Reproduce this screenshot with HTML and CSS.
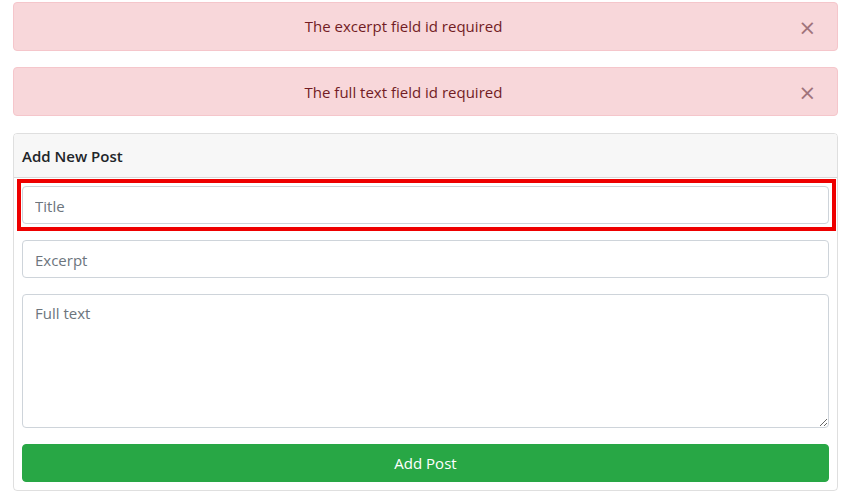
FILE: index.html
```html
<!DOCTYPE html>
<html>
<head>
<meta charset="utf-8">
<link rel="stylesheet" href="styles.css">
</head>
<body>
<div class="page">
  <div class="alert">
    <span class="alert-text">The excerpt field id required</span>
    <span class="close">&times;</span>
  </div>
  <div class="alert">
    <span class="alert-text">The full text field id required</span>
    <span class="close">&times;</span>
  </div>
  <div class="card">
    <div class="card-header">Add New Post</div>
    <div class="card-body">
      <div class="group highlighted">
        <input class="field" type="text" placeholder="Title">
        <div class="mark"></div>
      </div>
      <div class="group">
        <input class="field" type="text" placeholder="Excerpt">
      </div>
      <div class="group">
        <textarea class="field area" placeholder="Full text"></textarea>
      </div>
      <button class="btn">Add Post</button>
    </div>
  </div>
</div>
</body>
</html>
```
FILE: styles.css
```css
* { box-sizing: border-box; }
body {
  margin: 0;
  font-family: "Open Sans", "Noto Sans", sans-serif;
  font-size: 15px;
  color: #212529;
  background: #fff;
}
.page {
  padding: 2px 13px 0 13px;
  display: flex;
  flex-direction: column;
}
.alert {
  position: relative;
  height: 49px;
  padding: 0 64px 0 20px;
  background: #f8d7da;
  border: 1px solid #f5c6cb;
  border-radius: 4px;
  color: #721c24;
  display: flex;
  align-items: center;
  justify-content: center;
  margin-bottom: 16px;
}
.alert-text { margin-top: -1px; }
.alert + .alert .alert-text { margin-top: 1px; }
.close {
  position: absolute;
  right: 21px;
  top: 15px;
  font-size: 21px;
  line-height: 1;
  color: #a0737b;
  font-family: "DejaVu Sans", sans-serif;
}
.card {
  margin-top: 1px;
  border: 1px solid rgba(0,0,0,.125);
  border-radius: 4px;
  display: flex;
  flex-direction: column;
}
.card-header {
  background: #f7f7f7;
  border-bottom: 1px solid rgba(0,0,0,.125);
  height: 44px;
  padding: 0 8px;
  display: flex;
  align-items: center;
  font-weight: 600;
  color: #212529;
  border-radius: 3px 3px 0 0;
}
.card-body {
  padding: 8px 8px 8px 8px;
  display: flex;
  flex-direction: column;
  gap: 16px;
}
.group { position: relative; display: flex; }
.field {
  width: 100%;
  height: 38px;
  border: 1px solid #ced4da;
  border-radius: 4px;
  padding: 7px 12px 5px 12px;
  font-family: inherit;
  font-size: 15px;
  color: #495057;
  background: #fff;
  outline: none;
}
.field::placeholder { color: #6c757d; }
.area {
  height: 134px;
  resize: vertical;
  padding-top: 8px;
}
.mark {
  position: absolute;
  left: -5px;
  top: -7px;
  right: -7px;
  bottom: -7px;
  border: 4px solid #ee0000;
  pointer-events: none;
}
.btn {
  height: 38px;
  background: #28a745;
  border: 1px solid #28a745;
  border-radius: 4px;
  color: #fff;
  font-family: inherit;
  font-size: 15px;
}
```
